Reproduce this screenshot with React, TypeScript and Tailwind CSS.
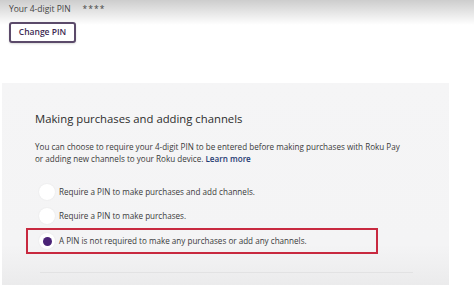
const options = [
  "Require a PIN to make purchases and add channels.",
  "Require a PIN to make purchases.",
];

function Radio({ checked }: { checked?: boolean }) {
  return (
    <span className="flex h-[16px] w-[16px] shrink-0 items-center justify-center rounded-full bg-white shadow-[0_0_2px_rgba(0,0,0,0.08)]">
      {checked && <span className="h-[9px] w-[9px] rounded-full bg-[#4b2477]" />}
    </span>
  );
}

export default function App() {
  return (
    <div
      className="h-[285px] w-[474px] overflow-hidden bg-white text-[#333]"
      style={{ fontFamily: '"Open Sans", "Liberation Sans", sans-serif' }}
    >
      <div className="h-[83px] bg-gradient-to-b from-[#cdcdcd] via-white via-30% to-white px-[9px] pt-[3px]">
        <div className="flex items-center gap-[12px] text-[8.5px] leading-[12px] text-[#444]">
          <span>Your 4-digit PIN</span>
          <span className="tracking-[1px]">****</span>
        </div>
        <button className="mt-[7px] h-[21px] w-[67px] rounded-[3px] border-2 border-[#5b4a6a] bg-white text-[8.5px] font-semibold text-[#3d2a52] shadow-[0_1px_2px_rgba(0,0,0,0.15)]">
          Change PIN
        </button>
      </div>

      <div className="ml-[2px] h-[202px] w-[447px] bg-gradient-to-b from-[#f5f5f6] via-[#f4f4f5] via-80% to-[#ebebec] pl-[33px] pt-[28px]">
        <h2 className="text-[11.3px] leading-[16px] text-[#2c2c2c]">
          Making purchases and adding channels
        </h2>
        <p className="mt-[14px] w-[380px] text-[8.1px] leading-[11.5px] text-[#3a3a3a]">
          You can choose to require your 4-digit PIN to be entered before making purchases with Roku Pay
          <br />
          or adding new channels to your Roku device.{" "}
          <span className="font-semibold text-[#1f3a72]">Learn more</span>
        </p>

        <div className="mt-[16px] flex flex-col">
          {options.map((label) => (
            <div key={label} className="flex h-[24px] items-center gap-[4px] pl-[4px]">
              <Radio />
              <span className="text-[8.1px] text-[#3a3a3a]">{label}</span>
            </div>
          ))}
          <div className="-ml-[9px] flex h-[26px] w-[352px] items-center gap-[4px] border-2 border-[#c8293f] pl-[11px]">
            <Radio checked />
            <span className="text-[8.1px] text-[#3a3a3a]">
              A PIN is not required to make any purchases or add any channels.
            </span>
          </div>
        </div>

        <div className="ml-[5px] mt-[18px] h-px w-[373px] bg-[#e2e2e3]" />
      </div>
    </div>
  );
}
